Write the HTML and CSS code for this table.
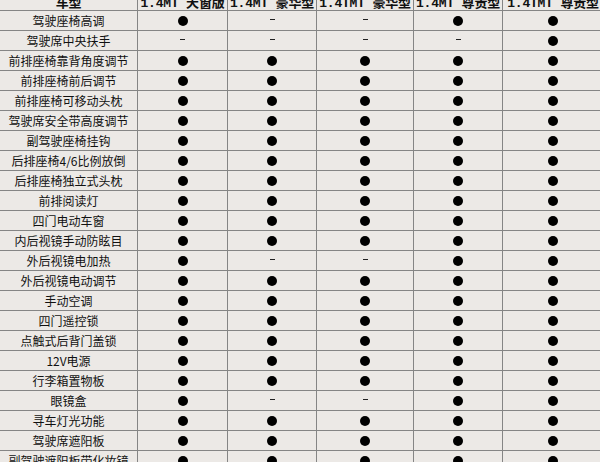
FILE: index.html
```html
<!DOCTYPE html>
<html>
<head>
<meta charset="utf-8">
<link rel="stylesheet" href="styles.css">
</head>
<body>
<div class="spec">
  <div class="h">车型</div><div class="h">1.4MT 天窗版</div><div class="h">1.4MT 豪华型</div><div class="h">1.4TMT 豪华型</div><div class="h">1.4MT 尊贵型</div><div class="h">1.4TMT 尊贵型</div>

  <div class="n">驾驶座椅高调</div><div class="c"><i class="y"></i></div><div class="c"><i class="d"></i></div><div class="c"><i class="d"></i></div><div class="c"><i class="y"></i></div><div class="c"><i class="y"></i></div>
  <div class="n">驾驶席中央扶手</div><div class="c"><i class="d"></i></div><div class="c"><i class="d"></i></div><div class="c"><i class="d"></i></div><div class="c"><i class="d"></i></div><div class="c"><i class="y"></i></div>
  <div class="n">前排座椅靠背角度调节</div><div class="c"><i class="y"></i></div><div class="c"><i class="y"></i></div><div class="c"><i class="y"></i></div><div class="c"><i class="y"></i></div><div class="c"><i class="y"></i></div>
  <div class="n">前排座椅前后调节</div><div class="c"><i class="y"></i></div><div class="c"><i class="y"></i></div><div class="c"><i class="y"></i></div><div class="c"><i class="y"></i></div><div class="c"><i class="y"></i></div>
  <div class="n">前排座椅可移动头枕</div><div class="c"><i class="y"></i></div><div class="c"><i class="y"></i></div><div class="c"><i class="y"></i></div><div class="c"><i class="y"></i></div><div class="c"><i class="y"></i></div>
  <div class="n">驾驶席安全带高度调节</div><div class="c"><i class="y"></i></div><div class="c"><i class="y"></i></div><div class="c"><i class="y"></i></div><div class="c"><i class="y"></i></div><div class="c"><i class="y"></i></div>
  <div class="n">副驾驶座椅挂钩</div><div class="c"><i class="y"></i></div><div class="c"><i class="y"></i></div><div class="c"><i class="y"></i></div><div class="c"><i class="y"></i></div><div class="c"><i class="y"></i></div>
  <div class="n">后排座椅4/6比例放倒</div><div class="c"><i class="y"></i></div><div class="c"><i class="y"></i></div><div class="c"><i class="y"></i></div><div class="c"><i class="y"></i></div><div class="c"><i class="y"></i></div>
  <div class="n">后排座椅独立式头枕</div><div class="c"><i class="y"></i></div><div class="c"><i class="y"></i></div><div class="c"><i class="y"></i></div><div class="c"><i class="y"></i></div><div class="c"><i class="y"></i></div>
  <div class="n">前排阅读灯</div><div class="c"><i class="y"></i></div><div class="c"><i class="y"></i></div><div class="c"><i class="y"></i></div><div class="c"><i class="y"></i></div><div class="c"><i class="y"></i></div>
  <div class="n">四门电动车窗</div><div class="c"><i class="y"></i></div><div class="c"><i class="y"></i></div><div class="c"><i class="y"></i></div><div class="c"><i class="y"></i></div><div class="c"><i class="y"></i></div>
  <div class="n">内后视镜手动防眩目</div><div class="c"><i class="y"></i></div><div class="c"><i class="y"></i></div><div class="c"><i class="y"></i></div><div class="c"><i class="y"></i></div><div class="c"><i class="y"></i></div>
  <div class="n">外后视镜电加热</div><div class="c"><i class="y"></i></div><div class="c"><i class="d"></i></div><div class="c"><i class="d"></i></div><div class="c"><i class="y"></i></div><div class="c"><i class="y"></i></div>
  <div class="n">外后视镜电动调节</div><div class="c"><i class="y"></i></div><div class="c"><i class="y"></i></div><div class="c"><i class="y"></i></div><div class="c"><i class="y"></i></div><div class="c"><i class="y"></i></div>
  <div class="n">手动空调</div><div class="c"><i class="y"></i></div><div class="c"><i class="y"></i></div><div class="c"><i class="y"></i></div><div class="c"><i class="y"></i></div><div class="c"><i class="y"></i></div>
  <div class="n">四门遥控锁</div><div class="c"><i class="y"></i></div><div class="c"><i class="y"></i></div><div class="c"><i class="y"></i></div><div class="c"><i class="y"></i></div><div class="c"><i class="y"></i></div>
  <div class="n">点触式后背门盖锁</div><div class="c"><i class="y"></i></div><div class="c"><i class="y"></i></div><div class="c"><i class="y"></i></div><div class="c"><i class="y"></i></div><div class="c"><i class="y"></i></div>
  <div class="n">12V电源</div><div class="c"><i class="y"></i></div><div class="c"><i class="y"></i></div><div class="c"><i class="y"></i></div><div class="c"><i class="y"></i></div><div class="c"><i class="y"></i></div>
  <div class="n">行李箱置物板</div><div class="c"><i class="y"></i></div><div class="c"><i class="y"></i></div><div class="c"><i class="y"></i></div><div class="c"><i class="y"></i></div><div class="c"><i class="y"></i></div>
  <div class="n">眼镜盒</div><div class="c"><i class="y"></i></div><div class="c"><i class="d"></i></div><div class="c"><i class="d"></i></div><div class="c"><i class="y"></i></div><div class="c"><i class="y"></i></div>
  <div class="n">寻车灯光功能</div><div class="c"><i class="y"></i></div><div class="c"><i class="y"></i></div><div class="c"><i class="y"></i></div><div class="c"><i class="y"></i></div><div class="c"><i class="y"></i></div>
  <div class="n">驾驶席遮阳板</div><div class="c"><i class="y"></i></div><div class="c"><i class="y"></i></div><div class="c"><i class="y"></i></div><div class="c"><i class="y"></i></div><div class="c"><i class="y"></i></div>
  <div class="n">副驾驶遮阳板带化妆镜</div><div class="c"><i class="y"></i></div><div class="c"><i class="y"></i></div><div class="c"><i class="y"></i></div><div class="c"><i class="y"></i></div><div class="c"><i class="y"></i></div>
</div>
</body>
</html>
```

FILE: styles.css
```css
html, body {
  margin: 0;
  padding: 0;
  background: #ece9e6;
  overflow: hidden;
}
.spec {
  display: grid;
  grid-template-columns: 137px 89px 88px 96px 88px 100px;
  grid-auto-rows: 19px;
  gap: 1px;
  background: #858585;
  margin-top: -9px;
  width: 604px;
  font-family: "Noto Sans CJK SC", "Noto Sans", sans-serif;
  font-size: 12px;
  color: #111;
}
.spec > div {
  background: #ece9e6;
  display: flex;
  align-items: center;
  justify-content: center;
  white-space: nowrap;
  overflow: hidden;
}
.h {
  font-family: "Liberation Mono", "Noto Sans CJK SC", monospace;
  font-weight: bold;
  font-size: 13px;
  letter-spacing: -0.2px;
  padding-top: 1px;
}
.n {
  line-height: 19px;
}
.y {
  display: block;
  width: 10px;
  height: 10px;
  border-radius: 50%;
  background: #000;
}
.d {
  display: block;
  width: 5px;
  height: 1px;
  background: #222;
  margin-top: -3px;
}
```
